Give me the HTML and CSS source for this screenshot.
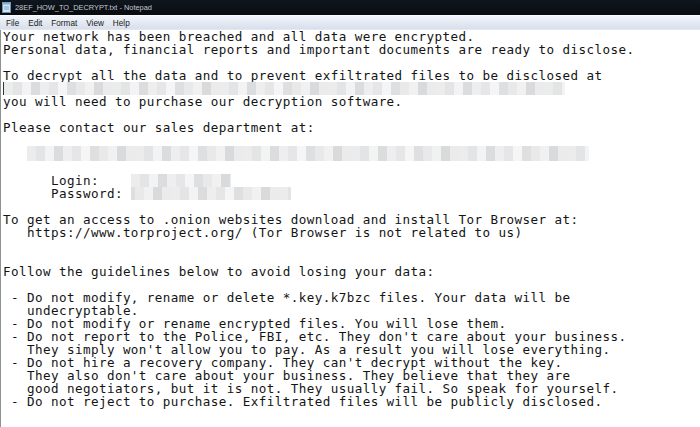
FILE: index.html
```html
<!DOCTYPE html>
<html lang="en">

<head>
    <meta charset="UTF-8">
    <meta name="viewport" content="width=device-width, initial-scale=1.0">
    <title>28EF_HOW_TO_DECRYPT.txt - Notepad</title>
    <link rel="stylesheet" href="styles.css">
</head>

<body>
    <div class="window">
        <!-- Title Bar -->
        <div class="titlebar">
            <svg class="app-icon" width="9" height="11" viewBox="0 0 9 11">
                <rect x="0.5" y="0.5" width="8" height="10" fill="#cfe3f2" stroke="#6f93b5" />
                <rect x="0.5" y="0.5" width="8" height="2" fill="#7fb0dc" />
                <line x1="2" y1="5" x2="7" y2="5" stroke="#8aa6c0" />
                <line x1="2" y1="7" x2="7" y2="7" stroke="#8aa6c0" />
            </svg>
            <span class="title">28EF_HOW_TO_DECRYPT.txt - Notepad</span>
        </div>

        <!-- Menu Bar -->
        <div class="menubar">
            <span>File</span>
            <span>Edit</span>
            <span>Format</span>
            <span>View</span>
            <span>Help</span>
        </div>

        <!-- Editor -->
        <div class="editor">
<pre>Your network has been breached and all data were encrypted.
Personal data, financial reports and important documents are ready to disclose.

To decrypt all the data and to prevent exfiltrated files to be disclosed at
<span class="mosaic mosaic-url"></span>
you will need to purchase our decryption software.

Please contact our sales department at:

   <span class="mosaic mosaic-site"></span>

      Login:    <span class="mosaic mosaic-login"></span>
      Password: <span class="mosaic mosaic-pass"></span>

To get an access to .onion websites download and install Tor Browser at:
   https://www.torproject.org/ (Tor Browser is not related to us)


Follow the guidelines below to avoid losing your data:

 - Do not modify, rename or delete *.key.k7bzc files. Your data will be
   undecryptable.
 - Do not modify or rename encrypted files. You will lose them.
 - Do not report to the Police, FBI, etc. They don't care about your business.
   They simply won't allow you to pay. As a result you will lose everything.
 - Do not hire a recovery company. They can't decrypt without the key.
   They also don't care about your business. They believe that they are
   good negotiators, but it is not. They usually fail. So speak for yourself.
 - Do not reject to purchase. Exfiltrated files will be publicly disclosed.
</pre>
        </div>
    </div>
</body>

</html>
```

FILE: styles.css
```css
/* Basic Reset */
* {
    margin: 0;
    padding: 0;
    box-sizing: border-box;
}

:root {
    --title-bg: #080c11;
    --menu-top: #f2f4fa;
    --menu-bottom: #d8dfec;
    --text: #141414;
}

body {
    width: 700px;
    height: 427px;
    overflow: hidden;
    background: #fff;
}

.window {
    display: flex;
    flex-direction: column;
    height: 100%;
}

/* Title Bar */
.titlebar {
    height: 15px;
    display: flex;
    align-items: center;
    gap: 4px;
    padding: 0 0 1px 2px;
    background: linear-gradient(to bottom, #10161e, var(--title-bg));
}

.title {
    font-family: 'Liberation Sans', Arial, sans-serif;
    font-size: 7.4px;
    color: #c4c8cd;
}

/* Menu Bar */
.menubar {
    height: 15px;
    display: flex;
    align-items: center;
    gap: 9px;
    padding: 2px 0 0 6px;
    border-top: 1px solid #fafbfd;
    border-bottom: 1px solid #e4e8f0;
    background: linear-gradient(to bottom, var(--menu-top), var(--menu-bottom));
    font-family: 'Liberation Sans', Arial, sans-serif;
    font-size: 8.2px;
    color: #1a1a1a;
}

/* Editor */
.editor {
    flex: 1;
    border-left: 1px solid #8d9297;
    padding: 0 0 0 2px;
    overflow: hidden;
}

.editor pre {
    font-family: 'DejaVu Sans Mono', 'Liberation Mono', monospace;
    font-size: 12.6px;
    letter-spacing: 0.41px;
    line-height: 13px;
    color: var(--text);
    white-space: pre;
}

/* Blurred regions */
.mosaic {
    display: inline-block;
    height: 13px;
    vertical-align: top;
    background-image:
        linear-gradient(90deg,
            #ececec 0 9px, #e2e4e6 9px 18px, #f3f3f3 18px 27px, #dadcde 27px 36px,
            #eeeeee 36px 45px, #e6e6e8 45px 54px, #f5f5f5 54px 63px, #dedfe0 63px 72px,
            #e9e9e9 72px 81px, #f1f1f1 81px 90px, #d9dadb 90px 99px, #ebebeb 99px 108px);
    background-size: 108px 100%;
}

.mosaic-url {
    width: 562px;
    border-left: 1px solid #333;
}

.mosaic-site {
    width: 562px;
    height: 15px;
    margin-top: -1px;
}

.mosaic-login {
    width: 100px;
}

.mosaic-pass {
    width: 160px;
    background-position: 40px 0;
}
```
